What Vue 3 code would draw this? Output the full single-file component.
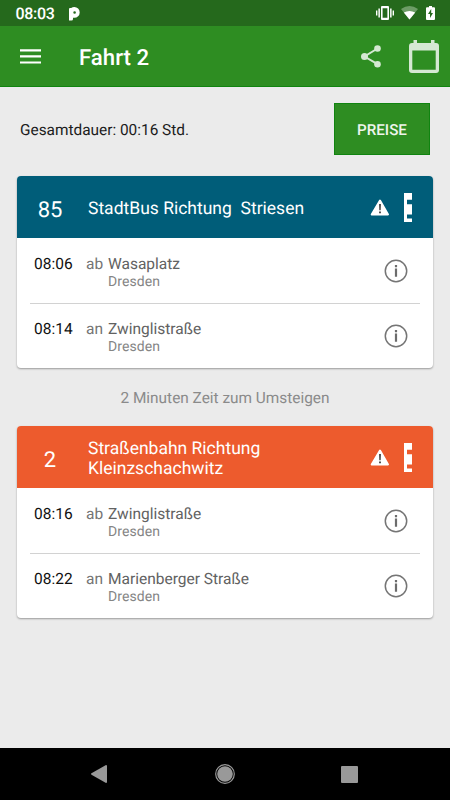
<script setup>
const trips = [
  {
    line: '85', theme: 'bus', title: ['StadtBus Richtung\u00a0 Striesen'],
    stops: [
      { time: '08:06', kind: 'ab', name: 'Wasaplatz', city: 'Dresden' },
      { time: '08:14', kind: 'an', name: 'Zwinglistraße', city: 'Dresden' },
    ],
    transfer: '2 Minuten Zeit zum Umsteigen',
  },
  {
    line: '2', theme: 'tram', title: ['Straßenbahn Richtung', 'Kleinzschachwitz'],
    stops: [
      { time: '08:16', kind: 'ab', name: 'Zwinglistraße', city: 'Dresden' },
      { time: '08:22', kind: 'an', name: 'Marienberger Straße', city: 'Dresden' },
    ],
  },
]
</script>

<template>
  <div class="screen">
    <div class="status">
      <span class="clock">08:03</span>
      <svg class="parking" width="11" height="14" viewBox="0 0 11 14">
        <path fill="#fff" fill-rule="evenodd" d="M0 13.500V2Q0 1 1 1H2.200Q3.500 0 5.300 0a5.400 5.400 0 0 1 0 10.800H4v1.200Q4 13.500 2.500 13.500ZM5.600 4.200a1.300 1.300 0 1 0 0 2.600 1.300 1.300 0 0 0 0-2.600Z" />
      </svg>
      <span class="grow"></span>
      <svg width="18" height="14" viewBox="0 0 18 14" fill="#fff">
        <path fill-rule="evenodd" d="M6 0h6q1 0 1 1v12q0 1-1 1H6q-1 0-1-1V1q0-1 1-1ZM6.600 2.300v9.400h4.800V2.300Z" />
        <path d="M2.400 2.500h1.500v9H2.400zM0 4.500h1.400v5H0zM14.100 2.500h1.500v9h-1.500zM16.600 4.500H18v5h-1.400z" />
      </svg>
      <svg class="wifi" width="17" height="14" viewBox="0 0 17 14">
        <path fill="#6d9c66" d="M0 3Q8.500-3 17 3L8.500 13.500Z" />
        <path fill="#fff" d="M2.800 6.500q5.700-3.200 11.400 0L8.500 13.500Z" />
      </svg>
      <svg class="battery" width="9" height="14" viewBox="0 0 9 14">
        <path fill="#fff" d="M1 1.300h2V0h3v1.300h2q1 0 1 1V13q0 1-1 1H1q-1 0-1-1V2.300q0-1 1-1Z" />
        <path fill="#25691c" d="M5.200 3 2 8.100h2V12l3-5.100H5.200Z" />
      </svg>
    </div>

    <header class="appbar">
      <svg class="menu" width="21" height="15" viewBox="0 0 21 15">
        <path stroke="#fff" stroke-width="2.200" d="M0 1.300h21M0 7.400h21M0 13.500h21" />
      </svg>
      <h1 class="heading">Fahrt 2</h1>
      <span class="grow"></span>
      <svg class="share" width="20" height="23" viewBox="0 0 20 23">
        <path fill="none" stroke="#d5e8d3" stroke-width="2" d="M16.500 3.500 3.500 11.500l13 7.700" />
        <g fill="#d5e8d3"><circle cx="16.500" cy="3.500" r="3.300" /><circle cx="3.500" cy="11.500" r="3.500" /><circle cx="16.500" cy="19.200" r="3.300" /></g>
      </svg>
      <svg class="calendar" width="30" height="33" viewBox="0 0 30 33">
        <path fill="#d5e8d3" fill-rule="evenodd" d="M4.500 0h3.500v3h14V0h3.500v3H27q3 0 3 3v24q0 3-3 3H3q-3 0-3-3V6q0-3 3-3h1.500ZM3.300 10.500v19.200h23.400V10.500Z" />
      </svg>
    </header>

    <main class="content">
      <div class="summary">
        <span class="duration">Gesamtdauer: 00:16 Std.</span>
        <button class="prices">PREISE</button>
      </div>

      <template v-for="trip in trips" :key="trip.line">
        <section class="card">
          <div class="card-head" :class="trip.theme">
            <span class="line">{{ trip.line }}</span>
            <div class="title"><div v-for="t in trip.title" :key="t">{{ t }}</div></div>
            <svg class="warn" width="20" height="17" viewBox="0 0 20 17">
              <path fill="#fff" stroke="#fff" stroke-width="2" stroke-linejoin="round" d="M10 1.500 18 15.500H1.700Z" />
              <path fill="#222" d="M9.200 5h1.600l-.2 6.200H9.400ZM9.200 12.600h1.600v1.600H9.200Z" />
            </svg>
            <svg class="occupancy" width="8" height="29" viewBox="0 0 8 29">
              <path fill="#fff" d="M0 0h8v6.800H3v4.400h5v10.300H3v4h5V29H0Z" />
            </svg>
          </div>
          <div v-for="stop in trip.stops" :key="stop.time" class="stop">
            <span class="time">{{ stop.time }}</span>
            <span class="kind">{{ stop.kind }}</span>
            <div class="place">
              <div class="name">{{ stop.name }}</div>
              <div class="city">{{ stop.city }}</div>
            </div>
            <svg class="info" width="24" height="24" viewBox="0 0 24 24">
              <circle cx="12" cy="12" r="10.700" fill="none" stroke="#757575" stroke-width="1.500" />
              <path fill="#6c6c6c" d="M10.900 6h2.200v2.200h-2.200zM10.900 9.500h2.200v8.300h-2.200z" />
            </svg>
          </div>
        </section>
        <p v-if="trip.transfer" class="transfer">{{ trip.transfer }}</p>
      </template>
    </main>

    <nav class="navbar">
      <svg width="16" height="18" viewBox="0 0 16 18"><path fill="#999" d="M15 0q1 0 1 1v16q0 1-1 1L.5 9.700q-1-.7 0-1.400Z" /></svg>
      <svg class="home" width="20" height="20" viewBox="0 0 20 20"><circle cx="10" cy="10" r="9.300" fill="none" stroke="#999" stroke-width="1.200" /><circle cx="10" cy="10" r="7.800" fill="#999" /></svg>
      <svg width="17" height="17" viewBox="0 0 17 17"><rect width="17" height="17" rx="1" fill="#999" /></svg>
    </nav>
  </div>
</template>

<style>
body { margin: 0; }
</style>

<style scoped>
.screen {
  width: 450px;
  height: 800px;
  display: flex;
  flex-direction: column;
  background: #ebebeb;
  font-family: Roboto, sans-serif;
  text-rendering: geometricPrecision;
  overflow: hidden;
}
svg { display: block; flex: none; }
.grow { flex: 1; }
.status {
  height: 26px;
  box-sizing: border-box;
  flex: none;
  display: flex;
  align-items: center;
  padding: 0 15.5px;
  background: #25691c;
  color: #fff;
}
.clock { width: 53px; font-size: 16px; font-weight: 500; line-height: 26px; letter-spacing: -0.3px; padding-top: 2px; box-sizing: border-box; }
.parking { margin-top: 1px; }
.wifi { margin-left: 7px; }
.battery { margin-left: 8px; }
.appbar {
  height: 61px;
  box-sizing: border-box;
  flex: none;
  display: flex;
  align-items: center;
  padding: 0 11px 0 20px;
  background: #2e8d22;
  border-bottom: 1px solid #108410;
}
.heading { margin: 4px 0 0 38px; color: #fff; font-size: 22.2px; font-weight: 500; line-height: 30px; }
.share { margin-right: 28px; }
.content { flex: 1; padding: 16px 17px 0; }
.summary {
  height: 52px;
  display: flex;
  justify-content: space-between;
  padding: 0 3px;
  margin-bottom: 21px;
}
.duration { font-size: 15.4px; line-height: 54px; color: #1c1c1c; }
.prices {
  width: 96px;
  height: 52px;
  padding: 2px 0 0;
  border: 1px solid #108410;
  background: #2e8d22;
  color: #eef5ed;
  font: 500 15.2px Roboto, sans-serif;
  text-rendering: inherit;
}
.card {
  height: 192px;
  border-radius: 4px;
  background: #fff;
  box-shadow: 0 1px 2px rgba(0, 0, 0, 0.35);
  overflow: hidden;
}
.card-head {
  height: 62px;
  display: flex;
  align-items: center;
  color: #fff;
}
.bus { background: #005d79; }
.tram { background: #ed5b2d; }
.line { width: 66px; margin-right: 5px; text-align: center; font-size: 22px; padding-top: 6px; }
.title { flex: 1; font-size: 17.5px; line-height: 20px; padding-top: 4px; white-space: nowrap; }
.warn { margin-right: 14px; margin-top: 1px; }
.occupancy { margin-right: 21px; }
.stop {
  height: 64px;
  margin: 0 13px;
  display: flex;
  align-items: flex-start;
  padding-top: 1px;
}
.stop + .stop { border-top: 1px solid #d2d2d2; padding-top: 0; }
.time { width: 52px; margin-left: 4px; font-size: 15.5px; line-height: 50px; color: #111; }
.kind { width: 22px; font-size: 15.5px; line-height: 50px; color: #757575; }
.place { flex: 1; padding-top: 16px; }
.name { font-size: 15.5px; line-height: 18px; color: #626262; }
.city { font-size: 14px; line-height: 18px; letter-spacing: 0.1px; color: #858585; }
.info { margin: 20px 12px 0 0; }
.transfer {
  height: 58px;
  margin: 0;
  text-align: center;
  font-size: 15.4px;
  line-height: 60px;
  color: #8a8a8a;
}
.navbar {
  height: 52px;
  flex: none;
  box-sizing: border-box;
  display: flex;
  align-items: center;
  justify-content: space-between;
  padding: 0 92px 0 91px;
  background: #000;
}
.home { margin-left: 1px; }
</style>
